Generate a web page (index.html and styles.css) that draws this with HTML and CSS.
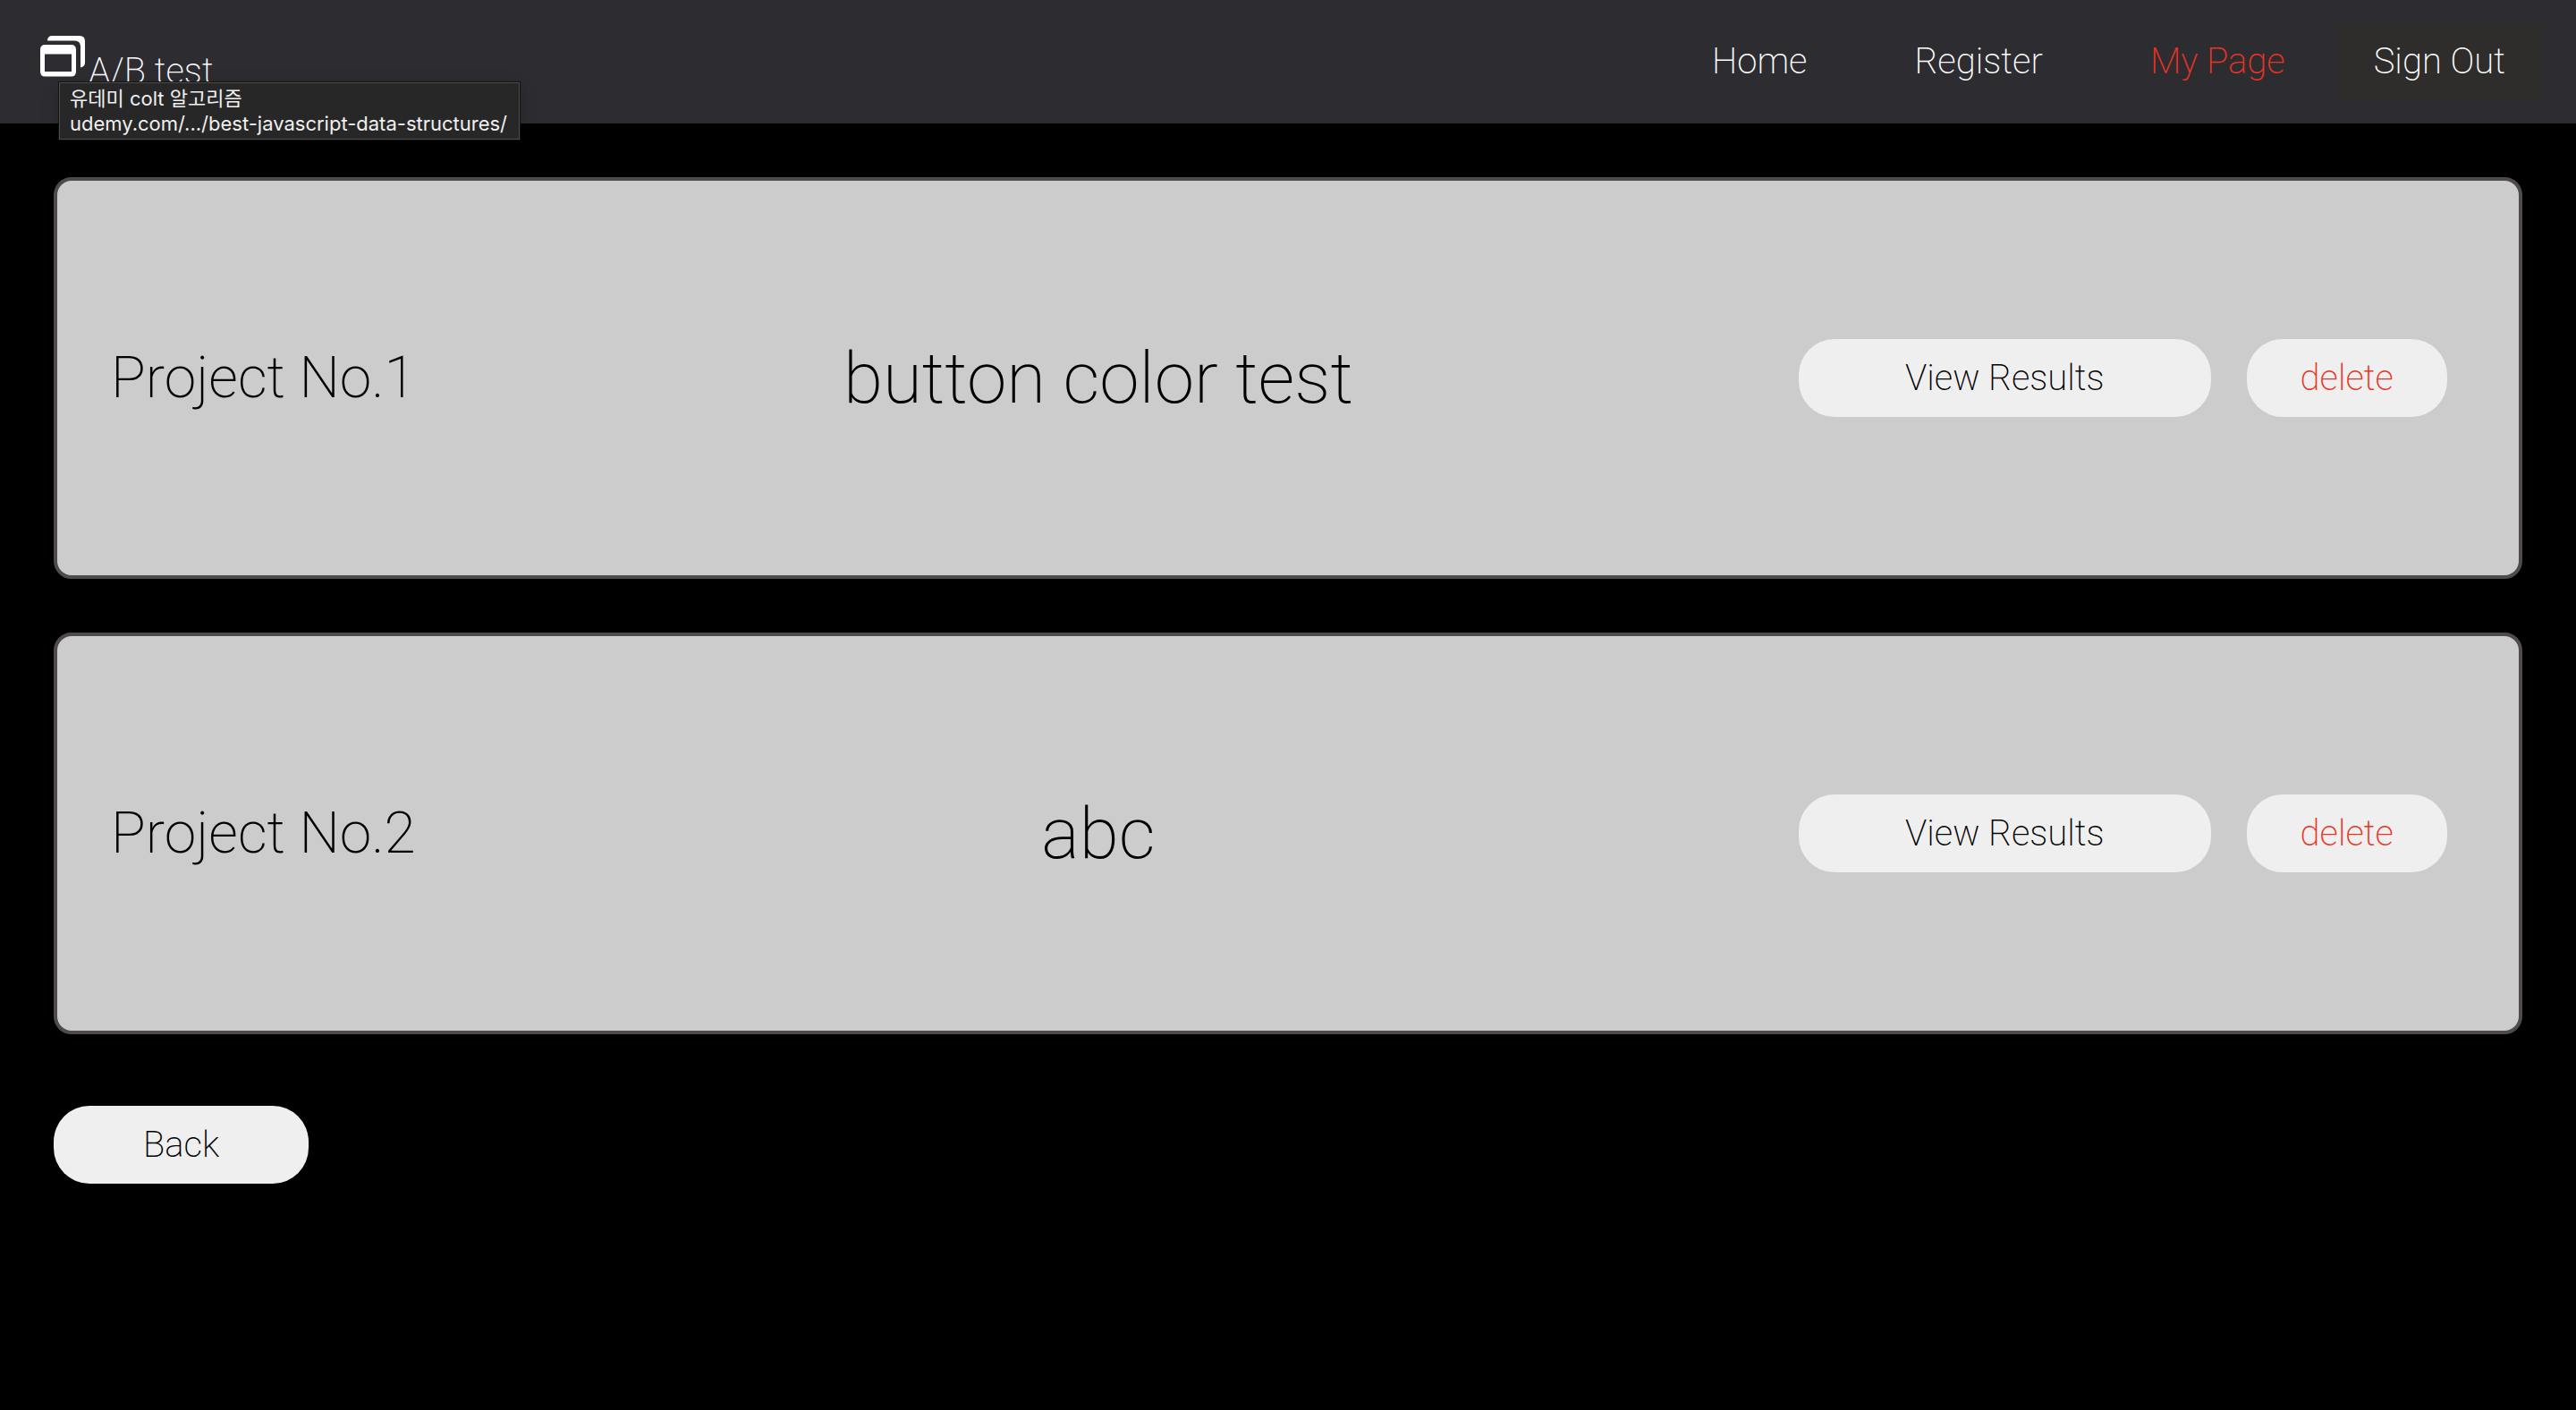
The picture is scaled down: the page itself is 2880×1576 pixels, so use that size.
FILE: index.html
```html
<!DOCTYPE html>
<html lang="en">
<head>
  <meta charset="utf-8">
  <title>A/B test</title>
  <link rel="stylesheet" href="styles.css">
</head>
<body>
  <header class="header">
    <a class="logo" href="#">
      <svg class="logo-icon" viewBox="0 0 50 46" aria-hidden="true">
        <path fill="currentColor" d="M8 5.500Q8 0 13.500 0H44Q50 0 50 6V30Q50 34.500 45 35.500V12Q45 5.500 38.500 5.500Z"/>
        <path fill="currentColor" fill-rule="evenodd" d="M5.500 10H34.500Q40 10 40 15.500V40Q40 45.500 34.500 45.500H5.500Q0 45.500 0 40V15.500Q0 10 5.500 10ZM5 20.500V40H35V20.500Z"/>
      </svg>
      <span class="logo-text">A/B test</span>
    </a>
    <nav class="nav">
      <a class="nav-link" href="#">Home</a>
      <a class="nav-link" href="#">Register</a>
      <a class="nav-link nav-link-active" href="#">My Page</a>
      <button class="sign-out" type="button">Sign Out</button>
    </nav>
    <div class="tooltip" role="tooltip">
      <div>유데미 colt 알고리즘</div>
      <div>udemy.com/.../best-javascript-data-structures/</div>
    </div>
  </header>
  <main class="main">
    <section class="card">
      <div class="card-number">Project No.1</div>
      <h2 class="card-title">button color test</h2>
      <div class="card-actions">
        <button class="button button-view" type="button">View Results</button>
        <button class="button button-delete" type="button">delete</button>
      </div>
    </section>
    <section class="card">
      <div class="card-number">Project No.2</div>
      <h2 class="card-title">abc</h2>
      <div class="card-actions">
        <button class="button button-view" type="button">View Results</button>
        <button class="button button-delete" type="button">delete</button>
      </div>
    </section>
    <button class="button button-back" type="button">Back</button>
  </main>
</body>
</html>
```
FILE: styles.css
```css
* {
  box-sizing: border-box;
}

body {
  margin: 0;
  background: #000;
  color: #000;
  font-family: Roboto, sans-serif;
  font-size: 40px;
  font-weight: 200;
  line-height: 47px;
}

button {
  border: 0;
  font: inherit;
  cursor: pointer;
}

.header {
  position: relative;
  display: flex;
  align-items: center;
  justify-content: space-between;
  padding: 25px 40px 26px 45px;
  background: #2d2c31;
  color: #fff;
}

.logo {
  display: flex;
  align-items: flex-start;
  gap: 4px;
  padding-top: 6px;
  color: inherit;
  text-decoration: none;
}

.logo-icon {
  width: 50px;
  height: 46px;
}

.logo-text {
  padding-top: 16px;
}

.nav {
  display: flex;
  align-items: center;
}

.nav-link {
  margin: 0 60px;
  color: inherit;
  text-decoration: none;
}

.nav-link-active {
  color: #ea3323;
}

.sign-out {
  padding: 20px 39px;
  background: #2e2d2b;
  color: inherit;
}

.tooltip {
  position: absolute;
  top: 92px;
  left: 66px;
  padding: 3px 13px 3px 11px;
  border: 1px solid #4c4c4c;
  background: #272727;
  box-shadow: 0 0 0 1px #111, 0 6px 20px rgba(0, 0, 0, 0.2);
  color: #f0f0f0;
  font-family: Inter, "Noto Sans CJK KR", sans-serif;
  font-size: 22px;
  font-weight: 400;
  line-height: 28px;
  white-space: nowrap;
}

.main {
  display: flex;
  flex-direction: column;
  align-items: stretch;
  gap: 60px;
  padding: 60px;
}

.card {
  display: flex;
  align-items: center;
  justify-content: space-between;
  min-height: 449px;
  padding: 60px;
  border: 4px solid #4f4b4a;
  border-radius: 20px;
  background: #ccc;
}

.card-number {
  font-size: 64px;
  line-height: 78px;
}

.card-title {
  margin: 0;
  font-size: 80px;
  font-weight: 200;
  line-height: 96px;
}

.card-actions {
  display: flex;
  gap: 40px;
  padding: 0 20px;
}

.button {
  padding: 20px 60px;
  border-radius: 40px;
  background: #efefef;
  color: #000;
}

.button-view {
  padding: 20px 119px;
}

.button-delete {
  color: #ea3323;
}

.button-back {
  align-self: flex-start;
  margin-top: 20px;
  padding: 20px 100px;
}
```
